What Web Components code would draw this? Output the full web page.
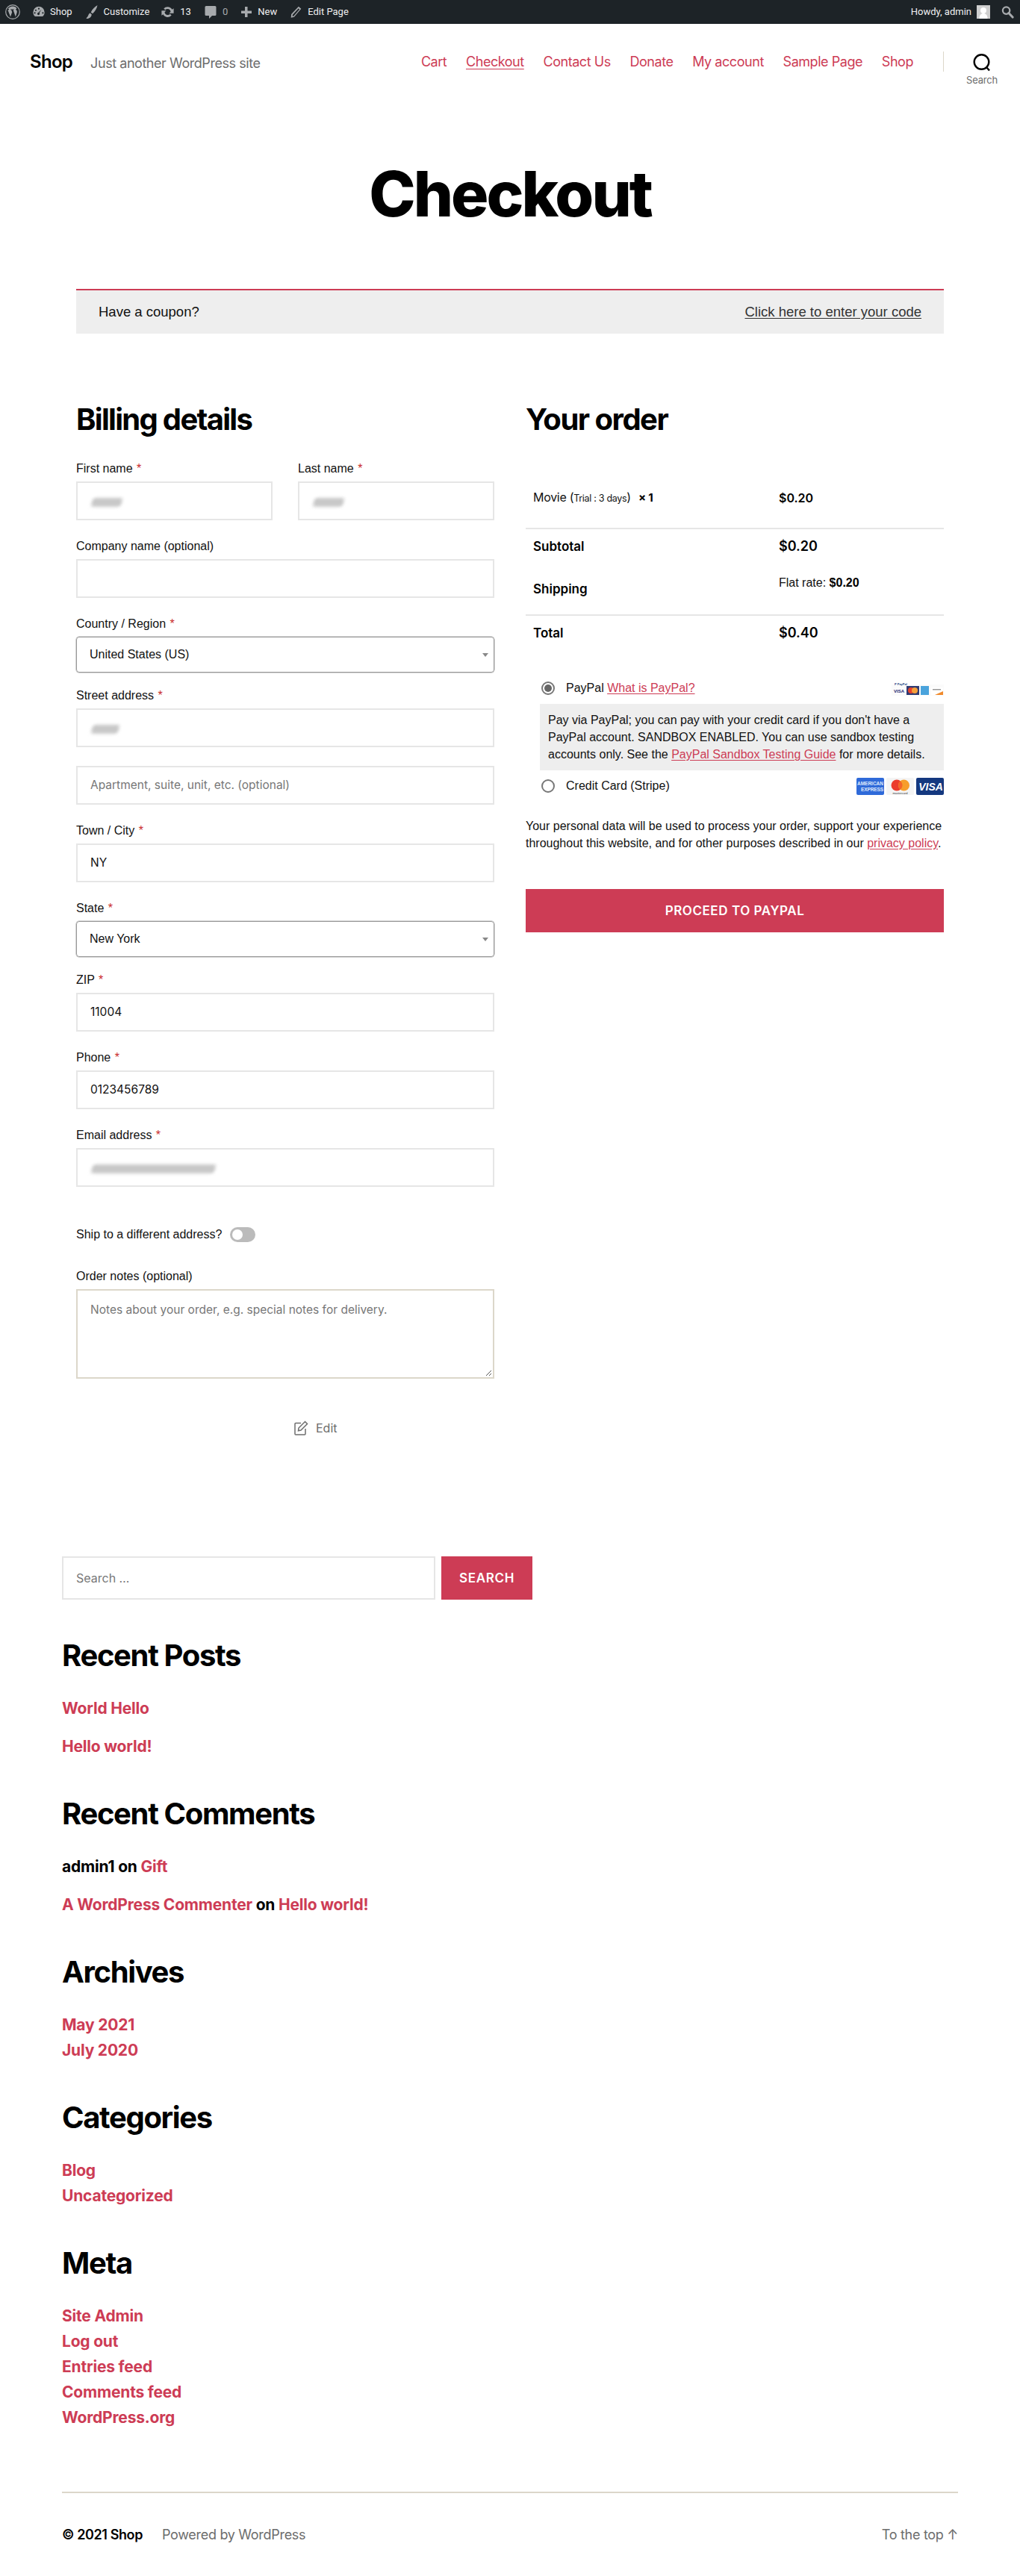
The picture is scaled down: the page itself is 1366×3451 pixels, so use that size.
<!DOCTYPE html>
<html lang="en"><head><meta charset="utf-8"><title>Checkout</title>
<style>
html,body{margin:0;padding:0;background:#fff}
body{font-family:"Liberation Sans",Arial,sans-serif;color:#000;--red:#cd3c55;--inter:"Inter","Liberation Sans",sans-serif}
</style></head><body>
<wc-adminbar></wc-adminbar>
<wc-siteheader></wc-siteheader>
<wc-pagetitle>Checkout</wc-pagetitle>
<wc-notice></wc-notice>
<wc-checkout>
  <wc-billing slot="left"></wc-billing>
  <wc-order slot="right"></wc-order>
</wc-checkout>
<wc-sidebar></wc-sidebar>
<wc-footer></wc-footer>
<script>
function def(name,css,html){
  customElements.define(name,class extends HTMLElement{
    constructor(){super();const r=this.attachShadow({mode:'open'});r.innerHTML='<style>'+css+'</style>'+(typeof html==='function'?html(this):html);}
  });
}
const ic='fill="#a7aaad"';
def('wc-adminbar',`
:host{display:flex;height:32px;background:#1d2327;color:#f0f0f1;font:13px/32px Roboto,"Open Sans",sans-serif;align-items:center;overflow:hidden}
svg{display:block;flex:none}
span{white-space:nowrap}
.dim{color:#a7aaad}
.sp{flex:1}
.ava{width:18px;height:18px;background:#d8d8d8;display:block;flex:none;margin-left:7px}
`,`
<svg style="margin-left:7px" width="20" height="20" viewBox="0 0 20 20"><circle cx="10" cy="10" r="9.3" fill="none" stroke="#a7aaad" stroke-width="1.2"/><path d="M3.4 7.2 7 16.6l2.2-6.3-1.1-3.1H7V6.4h4.8v.8h-1.2l3.3 9.2 1.7-5.4c.6-2-.2-3.200-1-3.800h-.2c-.6-.9.300-1.800 1-1.500C14.800 3.700 12.600 2.600 10 2.600 7.300 2.600 5 3.900 3.600 6H5v1.200z" fill="#a7aaad"/></svg>
<svg style="margin-left:16px" width="18" height="18" viewBox="0 0 20 20"><path d="M10 2a8.500 8.500 0 0 0-8.500 8.500c0 2.600 1.100 4.700 2.900 6.300h11.200c1.800-1.600 2.900-3.700 2.900-6.300A8.500 8.500 0 0 0 10 2z" ${ic}/><circle cx="10" cy="5.200" r="1.200" fill="#1d2327"/><circle cx="5.500" cy="7.500" r="1.200" fill="#1d2327"/><circle cx="4" cy="11.500" r="1.200" fill="#1d2327"/><circle cx="16" cy="11.500" r="1.200" fill="#1d2327"/><path d="M13.800 6.500 10.800 11.500A1.800 1.800 0 1 1 9.200 11z" fill="#1d2327"/></svg>
<span style="margin-left:6px">Shop</span>
<svg style="margin-left:16px" width="20" height="20" viewBox="0 0 20 20"><path d="M17.500 1C14 3 10.500 6.500 8.700 10.500l2.300 1.800C14 9.500 16.800 5.500 17.500 1zM7.800 11.500C5.500 12 5.800 14 4.800 15.500 4 16.800 3 17.500 2.500 19c3 .3 6.800-1.500 7.300-5.500z" ${ic}/></svg>
<span style="margin-left:6px">Customize</span>
<svg style="margin-left:15px" width="19" height="18" viewBox="0 0 20 20"><path d="M10 2.500a7.500 7.500 0 0 1 6.600 4L19 4.800V12h-6.800l2.300-2.300A5 5 0 0 0 10 5.500 4.800 4.800 0 0 0 6.400 7L4.200 4.900A7.500 7.500 0 0 1 10 2.500zM1 8h6.800l-2.300 2.300a5 5 0 0 0 4.500 4.200 4.800 4.800 0 0 0 3.600-1.500l2.200 2.100a7.500 7.500 0 0 1-12.400-1.500L1 15.200z" ${ic}/></svg>
<span style="margin-left:7px">13</span>
<svg style="margin-left:17px" width="18" height="20" viewBox="0 0 18 20"><path d="M3 2h12a1.500 1.500 0 0 1 1.500 1.500v10a1.500 1.500 0 0 1-1.500 1.500h-4l-4 4v-4H3a1.500 1.500 0 0 1-1.500-1.500v-10A1.500 1.500 0 0 1 3 2z" ${ic}/></svg>
<span class="dim" style="margin-left:7px">0</span>
<svg style="margin-left:17px" width="16" height="16" viewBox="0 0 16 16"><path d="M6 1h3.500v5.500H15V10H9.500v5H6v-5H1V6.500h5z" ${ic}/></svg>
<span style="margin-left:7px">New</span>
<svg style="margin-left:17px" width="17" height="18" viewBox="0 0 20 20"><path d="M14 1.500 18 5 7 18l-5 1 .5-5.500zM13.800 4.500 4.600 14.500l-.3 2.300 2-.4L15.500 6z" ${ic} fill-rule="evenodd"/></svg>
<span style="margin-left:7px">Edit Page</span>
<span class="sp"></span>
<span>Howdy, admin</span>
<svg class="ava" width="18" height="18" viewBox="0 0 18 18"><rect width="18" height="18" fill="#cfcfcf"/><circle cx="9" cy="7" r="4" fill="#fff"/><path d="M3.500 18c0-4.500 2-7 5.500-7s5.500 2.500 5.500 7z" fill="#fff"/></svg>
<svg style="margin:0 8px 0 15px" width="17" height="18" viewBox="0 0 18 18"><circle cx="7" cy="7" r="5" fill="none" stroke="#a7aaad" stroke-width="2.400"/><path d="M10.500 10.500 16 16.500" stroke="#a7aaad" stroke-width="3.200" stroke-linecap="round"/></svg>
`);

def('wc-siteheader',`
:host{display:flex;height:100px;box-sizing:border-box;padding:0 0 0 40px;font-family:"Inter",sans-serif;align-items:flex-start}
.brand{display:flex;align-items:center;height:24px;margin-top:39px}
b{font:600 24px/24px "Inter",sans-serif;letter-spacing:-.7px}
.tag{margin-left:24px;color:#6d6d6d;font-size:18px;letter-spacing:-.45px;margin-top:2px}
nav{display:flex;margin-left:auto;gap:25.7px;color:var(--red);font-size:18px;line-height:24px;margin-top:39px;letter-spacing:-.45px}
nav u{text-underline-offset:3px;text-decoration-thickness:1px}
.div{width:1px;height:27px;background:#dcd7ca;margin:37px 0 0 40px}
.s{width:102px;display:flex;flex-direction:column;align-items:center;margin-top:40px}
.s span{font-size:13px;line-height:16px;color:#6d6d6d;margin-top:3px;letter-spacing:-.2px}
`,`
<div class="brand"><b>Shop</b><span class="tag">Just another WordPress site</span></div>
<nav><span>Cart</span><u>Checkout</u><span>Contact Us</span><span>Donate</span><span>My account</span><span>Sample Page</span><span>Shop</span></nav>
<div class="div"></div>
<div class="s"><svg width="24" height="24" viewBox="0 0 24 24"><circle cx="11.500" cy="11" r="9.800" fill="none" stroke="#000" stroke-width="2.400"/><path d="M18.500 18.500 22 22.500" stroke="#000" stroke-width="2.400"/></svg><span>Search</span></div>
`);

def('wc-pagetitle',`
:host{display:block;text-align:center;font:800 84px/100px "Inter",sans-serif;letter-spacing:-3px;margin:78px 0 77px}
`,`<slot></slot>`);

def('wc-notice',`
:host{display:flex;justify-content:space-between;align-items:center;box-sizing:border-box;height:60px;margin:0 102px;padding:0 30px;background:#eee;border-top:2px solid var(--red);font-size:18.500px;color:#111}
u{color:#333;text-underline-offset:2px}
`,`<span>Have a coupon?</span><u>Click here to enter your code</u>`);

def('wc-checkout',`
:host{display:flex;gap:42px;margin:95px 102px 0}
div{width:560px;flex:none}
`,`<div><slot name="left"></slot></div><div><slot name="right"></slot></div>`);

def('wc-field',`
:host{display:block;width:var(--w,auto);margin-bottom:23px}
:host([nolabel]) label{display:none}
:host([nolabel]){margin-top:25px}
:host([select]){margin-bottom:19px}
label{display:block;font:16px/24px "Liberation Sans",sans-serif;color:#111;margin-bottom:5px;white-space:nowrap}
i{font-style:normal;color:#c92a2a;margin-left:1px}
.box{box-sizing:border-box;height:52px;border:2px solid #e6e6e6;display:flex;align-items:center;padding:0 17px;font:15.5px/24px "Inter",sans-serif;color:#111;position:relative}
:host([ph]) .box{color:#777}
:host([select]) .box{height:48px;border:1px solid #999;border-radius:4px;font-family:"Liberation Sans",sans-serif;font-size:16px;box-shadow:0 0 0 .5px #aaa}
.arr{position:absolute;right:7px;top:50%;margin-top:-2px;border:4px solid transparent;border-top:5px solid #888;border-bottom:0}
.smudge{background:#c8c8c8;height:var(--sh,12px);width:var(--sw,40px);filter:blur(2px);border-radius:4px;margin-left:2px;margin-top:4px;transform:skewX(-14deg)}
:host([area]) .box{height:120px;align-items:flex-start;padding-top:14px;border-color:#dcd7ca;color:#777}
.grip{position:absolute;right:1px;bottom:1px;display:none}
:host([area]) .grip{display:block}
`,t=>{
  const l=t.getAttribute('label'),req=t.hasAttribute('req'),sm=t.getAttribute('smudge'),sel=t.hasAttribute('select');
  return `<label>${l||''}${req?' <i>*</i>':''}</label><div class="box">${sm?`<div class="smudge" style="--sw:${sm}px"></div>`:`<span><slot></slot></span>`}${sel?'<div class="arr"></div>':''}<svg class="grip" width="9" height="9" viewBox="0 0 9 9"><path d="M1 8 8 1M5 8 8 5" stroke="#555" stroke-width="1"/></svg></div>`;
});

def('wc-billing',`
:host{display:block}
h2{font:700 40px/40px "Inter",sans-serif;letter-spacing:-1.700px;margin:0 0 34px}
.row{display:flex;gap:34px}
.row>*{flex:1}
.ship{display:flex;align-items:center;font:16px/24px "Liberation Sans",sans-serif;color:#111;margin:52px 0 32px;height:24px}
.tg{width:34px;height:20px;border-radius:10px;background:#bbb;margin-left:11px;display:flex;align-items:center;padding-left:3px;box-sizing:border-box}
.tg::before{content:"";width:14px;height:14px;background:#fff;border-radius:50%}
.edit{display:flex;align-items:center;height:24px;margin:54px 0 0 291px;color:#6d6d6d;font:16px/24px "Inter",sans-serif;gap:10px}
wc-field.last{margin-bottom:0}
`,`
<h2>Billing details</h2>
<div class="row"><wc-field label="First name" req smudge="40"></wc-field><wc-field label="Last name" req smudge="40"></wc-field></div>
<wc-field label="Company name (optional)"></wc-field>
<wc-field label="Country / Region" req select>United States (US)</wc-field>
<wc-field label="Street address" req smudge="36"></wc-field>
<wc-field nolabel ph>Apartment, suite, unit, etc. (optional)</wc-field>
<wc-field label="Town / City" req>NY</wc-field>
<wc-field label="State" req select>New York</wc-field>
<wc-field label="ZIP" req>11004</wc-field>
<wc-field label="Phone" req>0123456789</wc-field>
<wc-field class="last" label="Email address" req smudge="165"></wc-field>
<div class="ship">Ship to a different address?<div class="tg"></div></div>
<wc-field class="last" label="Order notes (optional)" area>Notes about your order, e.g. special notes for delivery.</wc-field>
<div class="edit"><svg width="20" height="20" viewBox="0 0 20 20" fill="none" stroke="#6d6d6d" stroke-width="1.500"><path d="M10 3.500H3a1 1 0 0 0-1 1V18a1 1 0 0 0 1 1h12a1 1 0 0 0 1-1v-7"/><path d="M15.500 1.500 18.500 4.500 10 13l-3.500.7.500-3.700z"/></svg><span>Edit</span></div>
`);

def('wc-order',`
:host{display:block;font-size:16px;color:#111}
h2{font:700 40px/40px "Inter",sans-serif;letter-spacing:-1.500px;margin:0 0 44px;color:#000}
.r{display:grid;grid-template-columns:329px 1fr;box-sizing:border-box;padding-left:10px;align-items:center;font:600 17px/24px "Inter",sans-serif;color:#000}
.v{font-size:18px}
.m{height:83px;border-bottom:2px solid #e6e6e6;font-size:16px}
.m .n{font:400 16px/24px "Inter",sans-serif;letter-spacing:-.3px;color:#111}
.m small{font-size:12.5px}
.m b{font-weight:700;margin-left:6px;color:#000;font-size:15px}
.st{height:46px}
.sh{height:70px;border-bottom:2px solid #e6e6e6}
.sh .fl{font:16px/24px "Liberation Sans",sans-serif;color:#111;margin-top:-16px}
.sh .fl b{color:#000}
.to{height:49px}
.to span{margin-top:-3px}
.pm{display:flex;align-items:center;padding-left:21px;height:24px;position:relative}
.ra{width:18px;height:18px;box-sizing:border-box;border:2px solid #777;border-radius:50%;display:flex;align-items:center;justify-content:center;margin-right:15px;flex:none}
.ra.on::before{content:"";width:10px;height:10px;border-radius:50%;background:#666}
.pm .ic{margin-left:auto;display:flex;gap:3px}
u{color:var(--red);text-underline-offset:2px}
.pay{margin-top:36px}
.box{margin:9px 0 9px 19px;background:#eee;padding:10px 11px;height:89px;box-sizing:border-box;line-height:23px;white-space:nowrap}
.priv{margin-top:30px;line-height:23px;white-space:nowrap}
.btn{margin-top:50px;height:58px;background:var(--red);color:#fff;font:600 17px/58px "Inter",sans-serif;letter-spacing:.56px;text-align:center}
svg{display:block}
svg text{font-family:"Liberation Sans",sans-serif}
`,`
<h2>Your order</h2>
<div class="r m"><span class="n">Movie (<small>Trial : 3 days</small>) <b>× 1</b></span><span>$0.20</span></div>
<div class="r st"><span>Subtotal</span><span class="v">$0.20</span></div>
<div class="r sh"><span>Shipping</span><span class="fl">Flat rate: <b>$0.20</b></span></div>
<div class="r to"><span>Total</span><span class="v">$0.40</span></div>
<div class="pm pay"><div class="ra on"></div><span>PayPal <u>What is PayPal?</u></span>
 <div class="ic"><svg width="70" height="19" viewBox="0 0 70 19"><rect y="4" width="70" height="15" fill="#fbfbfb"/><text x="4" y="5" font-size="4" font-weight="700" fill="#253b80">P PayPal</text><text x="3" y="15" font-size="6" font-weight="700" fill="#1a1f71">VISA</text><rect x="20" y="6" width="17" height="12" fill="#2f3a72"/><circle cx="26" cy="12" r="4" fill="#e8432c"/><circle cx="31" cy="12" r="4" fill="#f5a03b"/><rect x="39" y="6" width="11" height="12" fill="#4aa3dc"/><rect x="53" y="8" width="16" height="10" fill="#fff"/><path d="M58 18 69 13v5z" fill="#f08a2c"/><rect x="55" y="10" width="11" height="1.500" fill="#999"/></svg></div></div>
<div class="box">Pay via PayPal; you can pay with your credit card if you don't have a<br>PayPal account. SANDBOX ENABLED. You can use sandbox testing<br>accounts only. See the <u>PayPal Sandbox Testing Guide</u> for more details.</div>
<div class="pm"><div class="ra"></div><span>Credit Card (Stripe)</span>
 <div class="ic"><svg width="37" height="23" viewBox="0 0 37 23"><rect width="37" height="23" rx="2" fill="#2f6ad9"/><text x="18.500" y="10" font-size="6.500" font-weight="700" fill="#dfe9fb" text-anchor="middle" textLength="35">AMERICAN</text><text x="21" y="18" font-size="6.500" font-weight="700" fill="#dfe9fb" text-anchor="middle" textLength="30">EXPRESS</text></svg>
 <svg width="37" height="23" viewBox="0 0 37 23"><rect width="37" height="23" rx="2" fill="#f4f4f4"/><circle cx="14" cy="10" r="7.500" fill="#eb3c2d"/><circle cx="23.500" cy="10" r="7.500" fill="#f79e2b"/><path d="M18.800 4.200a7.500 7.500 0 0 1 0 11.600 7.500 7.500 0 0 1 0-11.600z" fill="#f4652a"/><text x="18.500" y="21.500" font-size="4" fill="#333" text-anchor="middle">mastercard</text></svg>
 <svg width="37" height="23" viewBox="0 0 37 23"><rect width="37" height="23" rx="2" fill="#14387f"/><text x="19.500" y="17" font-size="14" font-weight="700" font-style="italic" fill="#fff" text-anchor="middle">VISA</text></svg></div></div>
<div class="priv">Your personal data will be used to process your order, support your experience<br>throughout this website, and for other purposes described in our <u>privacy policy</u>.</div>
<div class="btn">PROCEED TO PAYPAL</div>
`);

def('wc-widget',`
:host{display:block;margin-bottom:49px}
h2{font:700 40px/48px "Inter",sans-serif;letter-spacing:-1.350px;margin:0 0 30px;color:#000}
.l{display:flex;flex-direction:column;font:700 21px/34px "Inter",sans-serif;gap:var(--g,0);color:var(--red);letter-spacing:-.2px}
`,t=>`<h2>${t.getAttribute('title')}</h2><div class="l"><slot></slot></div>`);

def('wc-sidebar',`
:host{display:block;margin:160px 83px 0}
.f{display:flex;gap:8px;margin-bottom:51px}
.i{width:500px;height:58px;box-sizing:border-box;border:2px solid #e6e6e6;display:flex;align-items:center;padding-left:17px;font:16px "Inter",sans-serif;color:#777}
.b{width:122px;height:58px;background:var(--red);color:#fff;font:600 17px/58px "Inter",sans-serif;text-align:center;letter-spacing:.7px}
wc-widget:last-child{margin-bottom:0}
.k{color:#000}
`,`
<div class="f"><div class="i">Search …</div><div class="b">SEARCH</div></div>
<wc-widget title="Recent Posts" style="--g:17px"><div>World Hello</div><div>Hello world!</div></wc-widget>
<wc-widget title="Recent Comments" style="--g:17px"><div><span class="k">admin1 on</span> Gift</div><div>A WordPress Commenter <span class="k">on</span> Hello world!</div></wc-widget>
<wc-widget title="Archives"><div>May 2021</div><div>July 2020</div></wc-widget>
<wc-widget title="Categories"><div>Blog</div><div>Uncategorized</div></wc-widget>
<wc-widget title="Meta"><div>Site Admin</div><div>Log out</div><div>Entries feed</div><div>Comments feed</div><div>WordPress.org</div></wc-widget>
`);

def('wc-footer',`
:host{display:flex;margin:82px 83px 0;border-top:2px solid #dcd7ca;padding:44px 0 44px;font:18px/24px "Inter",sans-serif;color:#6d6d6d;letter-spacing:-.3px;height:24px}
b{font-weight:600;color:#000;margin-right:26px;letter-spacing:-.4px}
.r{margin-left:auto}
`,`<b>© 2021 Shop</b><span>Powered by WordPress</span><span class="r">To the top ↑</span>`);
</script>
</body></html>
